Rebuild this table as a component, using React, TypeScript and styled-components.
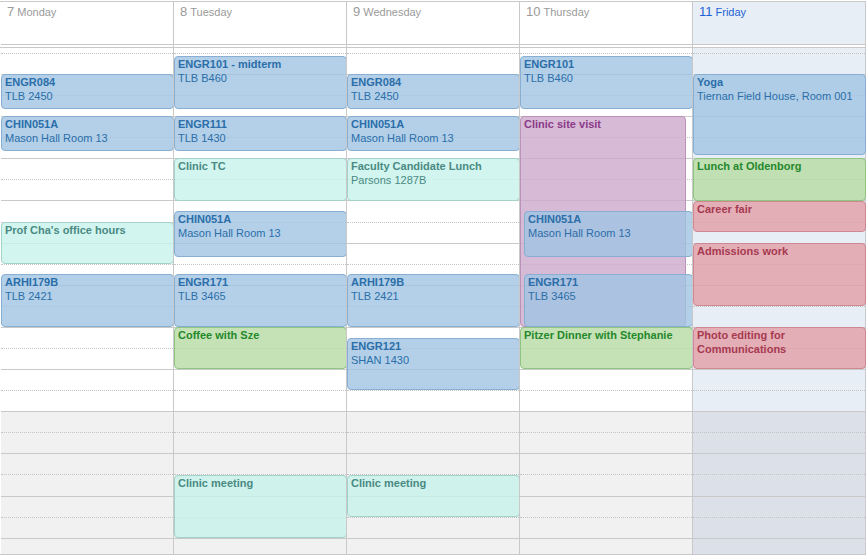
import React from 'react';
import styled, { createGlobalStyle } from 'styled-components';

const HOUR = 42.18;
const START = 9;
const END = 22;
const AFTER_HOURS = 18;

const GlobalStyle = createGlobalStyle`
  html, body { margin: 0; padding: 0; background: #fff; }
  body { font-family: "Liberation Sans", Arial, sans-serif; }
  * { box-sizing: border-box; }
`;

type Kind = 'blue' | 'teal' | 'green' | 'purple' | 'red';

const palette: Record<Kind, { bg: string; border: string; text: string }> = {
  blue: { bg: 'rgba(160,196,226,0.8)', border: '#88afd3', text: '#2b6ea9' },
  teal: { bg: 'rgba(199,242,236,0.8)', border: '#a3d2c9', text: '#4a8a82' },
  green: { bg: 'rgba(181,219,162,0.8)', border: '#8fc481', text: '#26882c' },
  purple: { bg: 'rgba(204,169,204,0.8)', border: '#bb93b9', text: '#8b3b89' },
  red: { bg: 'rgba(226,158,168,0.8)', border: '#cf8794', text: '#a63a50' },
};

type Fit = 'full' | 'narrow' | 'inset';

interface Ev {
  title: string;
  loc?: string;
  start: number;
  end: number;
  kind: Kind;
  fit?: Fit;
}

interface Day {
  num: number;
  name: string;
  today?: boolean;
  events: Ev[];
}

const m = (h: number, min: number) => h + min / 60;

const days: Day[] = [
  {
    num: 7,
    name: 'Monday',
    events: [
      { title: 'ENGR084', loc: 'TLB 2450', start: 10, end: m(10, 50), kind: 'blue' },
      { title: 'CHIN051A', loc: 'Mason Hall Room 13', start: 11, end: m(11, 50), kind: 'blue' },
      { title: "Prof Cha's office hours", start: m(13, 30), end: m(14, 30), kind: 'teal' },
      { title: 'ARHI179B', loc: 'TLB 2421', start: m(14, 45), end: 16, kind: 'blue' },
    ],
  },
  {
    num: 8,
    name: 'Tuesday',
    events: [
      { title: 'ENGR101 - midterm', loc: 'TLB B460', start: m(9, 35), end: m(10, 50), kind: 'blue' },
      { title: 'ENGR111', loc: 'TLB 1430', start: 11, end: m(11, 50), kind: 'blue' },
      { title: 'Clinic TC', start: 12, end: 13, kind: 'teal' },
      { title: 'CHIN051A', loc: 'Mason Hall Room 13', start: m(13, 15), end: m(14, 21), kind: 'blue' },
      { title: 'ENGR171', loc: 'TLB 3465', start: m(14, 45), end: 16, kind: 'blue' },
      { title: 'Coffee with Sze', start: 16, end: 17, kind: 'green' },
      { title: 'Clinic meeting', start: m(19, 30), end: 21, kind: 'teal' },
    ],
  },
  {
    num: 9,
    name: 'Wednesday',
    events: [
      { title: 'ENGR084', loc: 'TLB 2450', start: 10, end: m(10, 50), kind: 'blue' },
      { title: 'CHIN051A', loc: 'Mason Hall Room 13', start: 11, end: m(11, 50), kind: 'blue' },
      { title: 'Faculty Candidate Lunch', loc: 'Parsons 1287B', start: 12, end: 13, kind: 'teal' },
      { title: 'ARHI179B', loc: 'TLB 2421', start: m(14, 45), end: 16, kind: 'blue' },
      { title: 'ENGR121', loc: 'SHAN 1430', start: m(16, 15), end: m(17, 30), kind: 'blue' },
      { title: 'Clinic meeting', start: m(19, 30), end: m(20, 30), kind: 'teal' },
    ],
  },
  {
    num: 10,
    name: 'Thursday',
    events: [
      { title: 'ENGR101', loc: 'TLB B460', start: m(9, 35), end: m(10, 50), kind: 'blue' },
      { title: 'Clinic site visit', start: 11, end: 16, kind: 'purple', fit: 'narrow' },
      { title: 'CHIN051A', loc: 'Mason Hall Room 13', start: m(13, 15), end: m(14, 21), kind: 'blue', fit: 'inset' },
      { title: 'ENGR171', loc: 'TLB 3465', start: m(14, 45), end: 16, kind: 'blue', fit: 'inset' },
      { title: 'Pitzer Dinner with Stephanie', start: 16, end: 17, kind: 'green' },
    ],
  },
  {
    num: 11,
    name: 'Friday',
    today: true,
    events: [
      { title: 'Yoga', loc: 'Tiernan Field House, Room 001', start: 10, end: m(11, 55), kind: 'blue' },
      { title: 'Lunch at Oldenborg', start: 12, end: 13, kind: 'green' },
      { title: 'Career fair', start: 13, end: m(13, 45), kind: 'red' },
      { title: 'Admissions work', start: 14, end: m(15, 30), kind: 'red' },
      { title: 'Photo editing for Communications', start: 16, end: 17, kind: 'red' },
    ],
  },
];

const LINE = '#c9c9c9';
const COLS = '173px 173px 173px 173px 174px';

const Page = styled.div`
  width: 866px;
  padding-top: 1px;
`;

const HeaderRow = styled.div`
  display: grid;
  grid-template-columns: ${COLS};
  border-top: 1px solid ${LINE};
`;

const HeaderCell = styled.div<{ $first?: boolean; $last?: boolean }>`
  border-left: 1px solid ${(p) => (p.$first ? '#fff' : LINE)};
  border-right: ${(p) => (p.$last ? `1px solid ${LINE}` : 'none')};
  padding-bottom: 2px;
`;

const DayLabel = styled.div<{ $today?: boolean }>`
  height: 43px;
  border-bottom: 1px solid ${LINE};
  background: ${(p) => (p.$today ? '#e8eef6' : '#fff')};
  padding: 2px 0 0 6px;
  color: ${(p) => (p.$today ? '#1d63d4' : '#9a9a9a')};
  font-size: 11px;
  white-space: nowrap;
`;

const DayNum = styled.span`
  font-size: 13px;
  margin-right: 3px;
`;

const Viewport = styled.div`
  height: 508px;
  border-top: 1px solid ${LINE};
  border-bottom: 1px solid ${LINE};
  overflow: hidden;
`;

const BodyGrid = styled.div`
  display: grid;
  grid-template-columns: ${COLS};
  margin-top: ${-(48 - (74 - HOUR))}px;
`;

const DayColumn = styled.div<{ $first?: boolean; $last?: boolean; $today?: boolean }>`
  position: relative;
  display: flex;
  flex-direction: column;
  border-left: 1px solid ${(p) => (p.$first ? '#fff' : LINE)};
  border-right: ${(p) => (p.$last ? `1px solid ${LINE}` : 'none')};
  background: ${(p) => (p.$today ? '#e8eef6' : '#fff')};
`;

const Slot = styled.div<{ $half?: boolean; $after?: boolean; $today?: boolean }>`
  height: ${HOUR / 2}px;
  flex: none;
  border-top: 1px ${(p) => (p.$half ? 'dotted' : 'solid')} ${(p) => (p.$half ? '#c4c4c4' : LINE)};
  background: ${(p) => (p.$after ? (p.$today ? '#dce1e9' : '#f1f1f1') : 'transparent')};
`;

const EventBox = styled.div<{ $kind: Kind; $fit: Fit }>`
  position: absolute;
  left: ${(p) => (p.$fit === 'inset' ? '4px' : '0')};
  width: ${(p) =>
    p.$fit === 'narrow' ? 'calc(100% - 6px)' : p.$fit === 'inset' ? 'calc(100% - 3px)' : 'calc(100% + 1px)'};
  background: ${(p) => palette[p.$kind].bg};
  border: 1px solid ${(p) => palette[p.$kind].border};
  border-radius: 4px;
  color: ${(p) => palette[p.$kind].text};
  padding: 0 3px;
  font-size: 11px;
  line-height: 14px;
  overflow: hidden;
`;

const EventTitle = styled.div`
  font-weight: bold;
`;

const EventLoc = styled.div`
  font-weight: normal;
`;

const slots: { hour: number; half: boolean }[] = [];
for (let h = START; h < END; h++) {
  slots.push({ hour: h, half: false });
  slots.push({ hour: h + 0.5, half: true });
}

export default function App() {
  return (
    <Page>
      <GlobalStyle />
      <HeaderRow>
        {days.map((d, i) => (
          <HeaderCell key={d.name} $first={i === 0} $last={i === days.length - 1}>
            <DayLabel $today={d.today}>
              <DayNum>{d.num}</DayNum>
              {d.name}
            </DayLabel>
          </HeaderCell>
        ))}
      </HeaderRow>
      <Viewport>
        <BodyGrid>
          {days.map((d, i) => (
            <DayColumn key={d.name} $first={i === 0} $last={i === days.length - 1} $today={d.today}>
              {slots.map((s) => (
                <Slot key={s.hour} $half={s.half} $after={s.hour >= AFTER_HOURS} $today={d.today} />
              ))}
              {d.events.map((e) => (
                <EventBox
                  key={e.title + e.start}
                  $kind={e.kind}
                  $fit={e.fit ?? 'full'}
                  style={{ top: (e.start - START) * HOUR, height: (e.end - e.start) * HOUR }}
                >
                  <EventTitle>{e.title}</EventTitle>
                  {e.loc && <EventLoc>{e.loc}</EventLoc>}
                </EventBox>
              ))}
            </DayColumn>
          ))}
        </BodyGrid>
      </Viewport>
    </Page>
  );
}
